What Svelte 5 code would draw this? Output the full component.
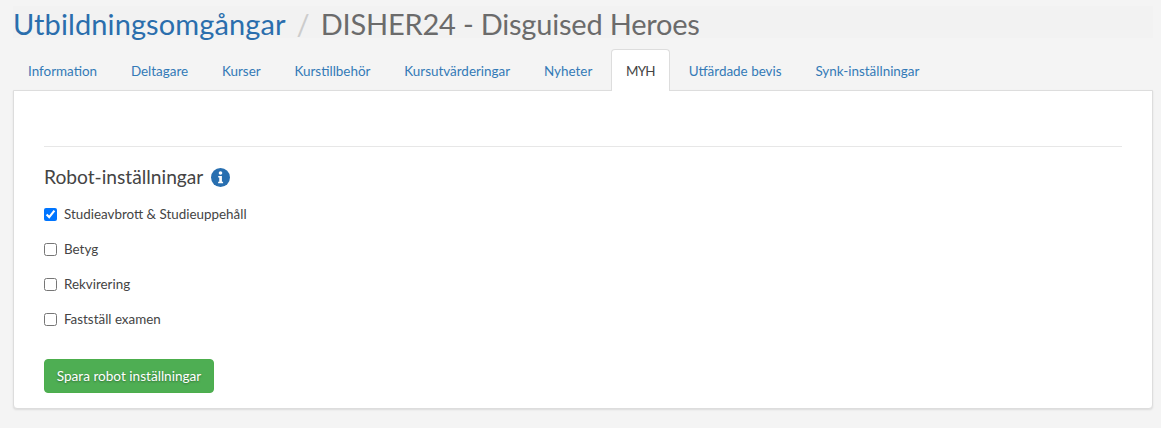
<script>
  const tabs = [
    "Information",
    "Deltagare",
    "Kurser",
    "Kurstillbehör",
    "Kursutvärderingar",
    "Nyheter",
    "MYH",
    "Utfärdade bevis",
    "Synk-inställningar"
  ];

  let robots = $state([
    { label: "Studieavbrott & Studieuppehåll", checked: true },
    { label: "Betyg", checked: false },
    { label: "Rekvirering", checked: false },
    { label: "Fastställ examen", checked: false }
  ]);
</script>

<div class="page">
  <h1 class="page-title">
    <a href="#top">Utbildningsomgångar</a>
    <span class="sep">/</span>
    <span class="name">DISHER24 - Disguised Heroes</span>
  </h1>

  <ul class="tabs">
    {#each tabs as tab}
      <li class:active={tab === "MYH"}><a href="#top">{tab}</a></li>
    {/each}
  </ul>

  <div class="panel">
    <hr />
    <h3>
      Robot-inställningar
      <svg class="info" viewBox="0 0 20 20" width="19" height="19" aria-hidden="true">
        <circle cx="10" cy="10" r="10" fill="#286fb0" />
        <circle cx="10" cy="5.3" r="1.9" fill="#fff" />
        <path d="M7.6 8.4h3.9v6h1.2v1.6H7.5v-1.6h1.2v-4.4H7.6z" fill="#fff" />
      </svg>
    </h3>

    <div class="checks">
      {#each robots as robot}
        <label>
          <input type="checkbox" bind:checked={robot.checked} />
          {robot.label}
        </label>
      {/each}
    </div>

    <button type="button" class="save">Spara robot inställningar</button>
  </div>
</div>

<style>
  :global(body) {
    background: #f4f4f4;
    color: #444;
    font-family: Lato, "Noto Sans", sans-serif;
  }

  .page {
    padding: 6px 8px 20px 13px;
  }

  .page-title {
    margin: 0;
    height: 32px;
    background: #f2f2f2;
    color: #6b6b6b;
    font-size: 29px;
    font-weight: 400;
    line-height: 36px;
    display: flex;
    gap: 11px;
    white-space: nowrap;
  }

  .page-title a {
    color: #2a6ead;
    text-decoration: none;
    letter-spacing: 0.1px;
  }

  .name {
    letter-spacing: -0.2px;
  }

  .sep {
    color: #ccc;
  }

  .tabs {
    display: flex;
    list-style: none;
    margin: 11px 0 -1px;
    padding: 0;
    position: relative;
    z-index: 1;
  }

  .tabs li {
    margin-right: 3.8px;
  }

  .tabs a {
    display: block;
    height: 40px;
    padding: 0 14px;
    line-height: 42px;
    font-size: 13.45px;
    color: #337ab7;
    text-decoration: none;
    border: 1px solid transparent;
    border-bottom: 0;
    border-radius: 4px 4px 0 0;
  }

  .tabs li.active a {
    background: #fff;
    color: #444;
    border-color: #ddd;
    height: 41px;
    letter-spacing: -0.8px;
  }

  .panel {
    background: #fff;
    border: 1px solid #ddd;
    border-radius: 0 0 4px 4px;
    box-shadow: 0 1px 2px rgba(0, 0, 0, 0.1);
    padding: 55px 30px 14px;
    height: 319px;
    box-sizing: border-box;
  }

  hr {
    border: 0;
    border-top: 1px solid #e7e7e7;
    margin: 0;
  }

  h3 {
    margin: 18px 0 15px;
    font-size: 19.2px;
    font-weight: 400;
    line-height: 24px;
    color: #444;
    display: flex;
    align-items: center;
    gap: 8px;
  }

  .checks {
    display: flex;
    flex-direction: column;
    gap: 15px;
  }

  label {
    display: flex;
    align-items: center;
    gap: 7px;
    height: 20px;
    font-size: 13.4px;
    color: #444;
  }

  input {
    margin: 0;
    width: 13px;
    height: 13px;
  }

  .save {
    display: block;
    margin-top: 30px;
    width: 170px;
    height: 34px;
    background: #4eae53;
    border: 1px solid #4cae4c;
    border-radius: 4px;
    color: #fff;
    font: inherit;
    font-size: 13.6px;
    text-shadow: 0 1px 2px rgba(0, 0, 0, 0.35);
  }
</style>
